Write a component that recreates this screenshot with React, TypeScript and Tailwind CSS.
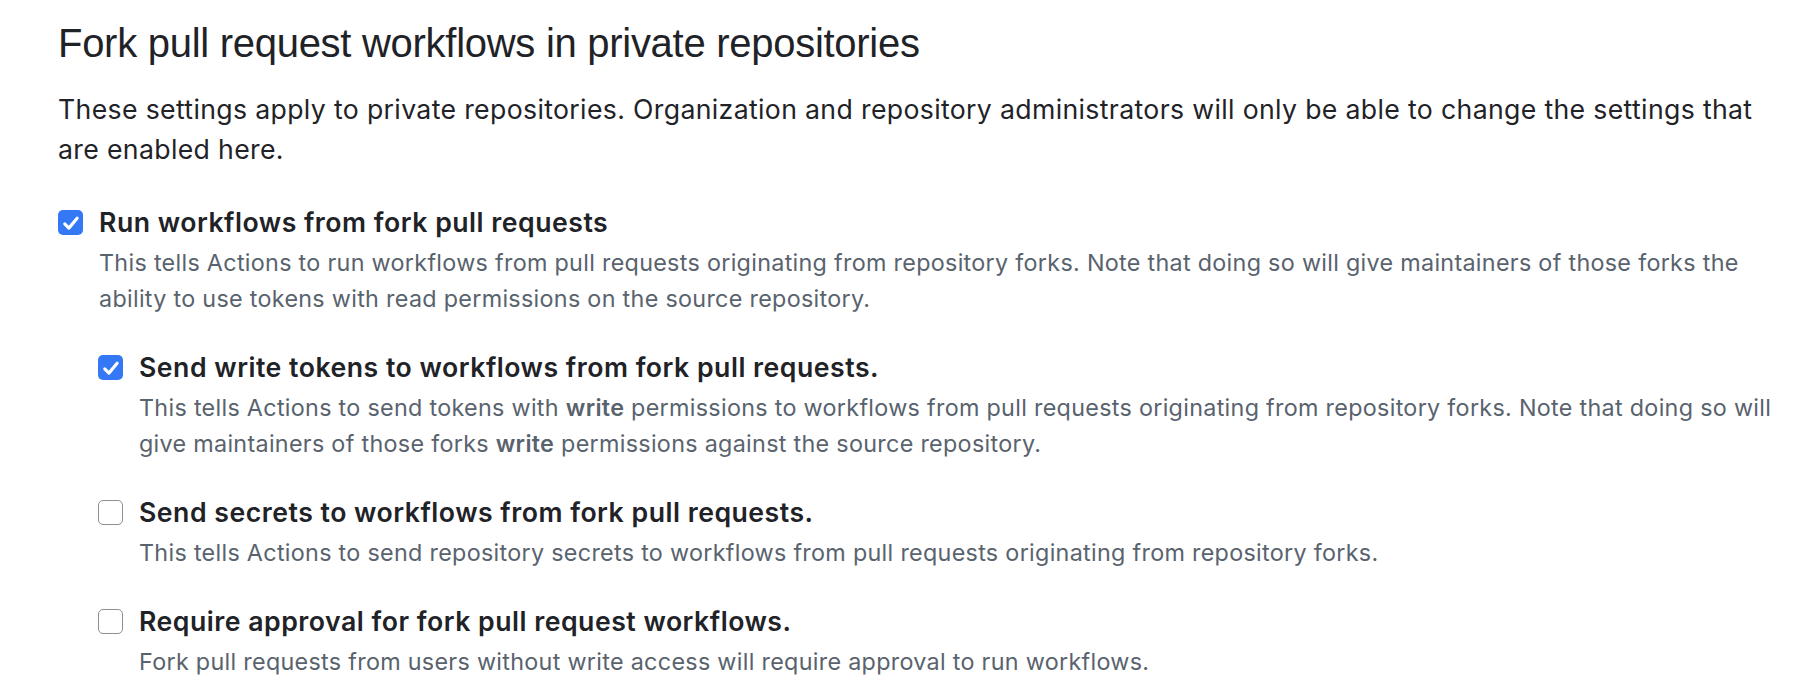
import React from 'react';

const font = { fontFamily: 'Inter, "Liberation Sans", Arial, sans-serif' };
const headingFont = { fontFamily: '"Liberation Sans", Arial, sans-serif' };

function Box({ checked }: { checked: boolean }) {
  if (checked) {
    return (
      <span className="mt-[5px] flex h-[25px] w-[25px] shrink-0 items-center justify-center rounded-[5px] bg-[#3478f6]">
        <svg viewBox="0 0 16 16" className="h-[20px] w-[20px]" fill="none">
          <path d="M3 8.7l3.3 3.4 6.6-7.9" stroke="#fff" strokeWidth="2.5" strokeLinecap="round" strokeLinejoin="round" />
        </svg>
      </span>
    );
  }
  return <span className="mt-[5px] h-[25px] w-[25px] shrink-0 rounded-[5px] border-[1.5px] border-[#8f8f8f] bg-white" />;
}

function Option({
  checked,
  label,
  children,
  nested,
}: {
  checked: boolean;
  label: string;
  children: React.ReactNode;
  nested?: React.ReactNode;
}) {
  return (
    <div>
      <div className="flex items-start gap-[16px]">
        <Box checked={checked} />
        <div>
          <div className="text-[26.67px] font-semibold leading-[35px] tracking-[0.5px] text-[#1f2328]">{label}</div>
          <p className="mt-[5px] text-[23.33px] leading-[36px] tracking-[0.3px] text-[#59636e]">{children}</p>
        </div>
      </div>
      {nested && <div className="flex flex-col gap-[33px] pl-[40px] pt-[33px]">{nested}</div>}
    </div>
  );
}

export default function App() {
  return (
    <div className="min-h-screen bg-white pl-[58px] pr-[20px] pt-[13px]" style={font}>
      <h2 className="text-[40px] font-normal leading-[60px] tracking-[-0.28px] text-[#1f2328]" style={headingFont}>
        Fork pull request workflows in private repositories
      </h2>
      <p className="mt-[16px] text-[26.67px] leading-[40px] tracking-[0.34px] text-[#1f2328]">
        These settings apply to private repositories. Organization and repository administrators will only be able
        to change the settings that are enabled here.
      </p>
      <div className="mt-[36px]">
        <Option
          checked
          label="Run workflows from fork pull requests"
          nested={
            <>
              <Option checked label="Send write tokens to workflows from fork pull requests.">
                This tells Actions to send tokens with <b className="font-semibold">write</b> permissions to workflows
                from pull requests originating from repository forks. Note that doing so will give maintainers of those
                forks <b className="font-semibold">write</b> permissions against the source repository.
              </Option>
              <Option checked={false} label="Send secrets to workflows from fork pull requests.">
                This tells Actions to send repository secrets to workflows from pull requests originating from
                repository forks.
              </Option>
              <Option checked={false} label="Require approval for fork pull request workflows.">
                Fork pull requests from users without write access will require approval to run workflows.
              </Option>
            </>
          }
        >
          This tells Actions to run workflows from pull requests originating from repository forks. Note that doing so
          will give maintainers of those forks the ability to use tokens with read permissions on the source
          repository.
        </Option>
      </div>
    </div>
  );
}
